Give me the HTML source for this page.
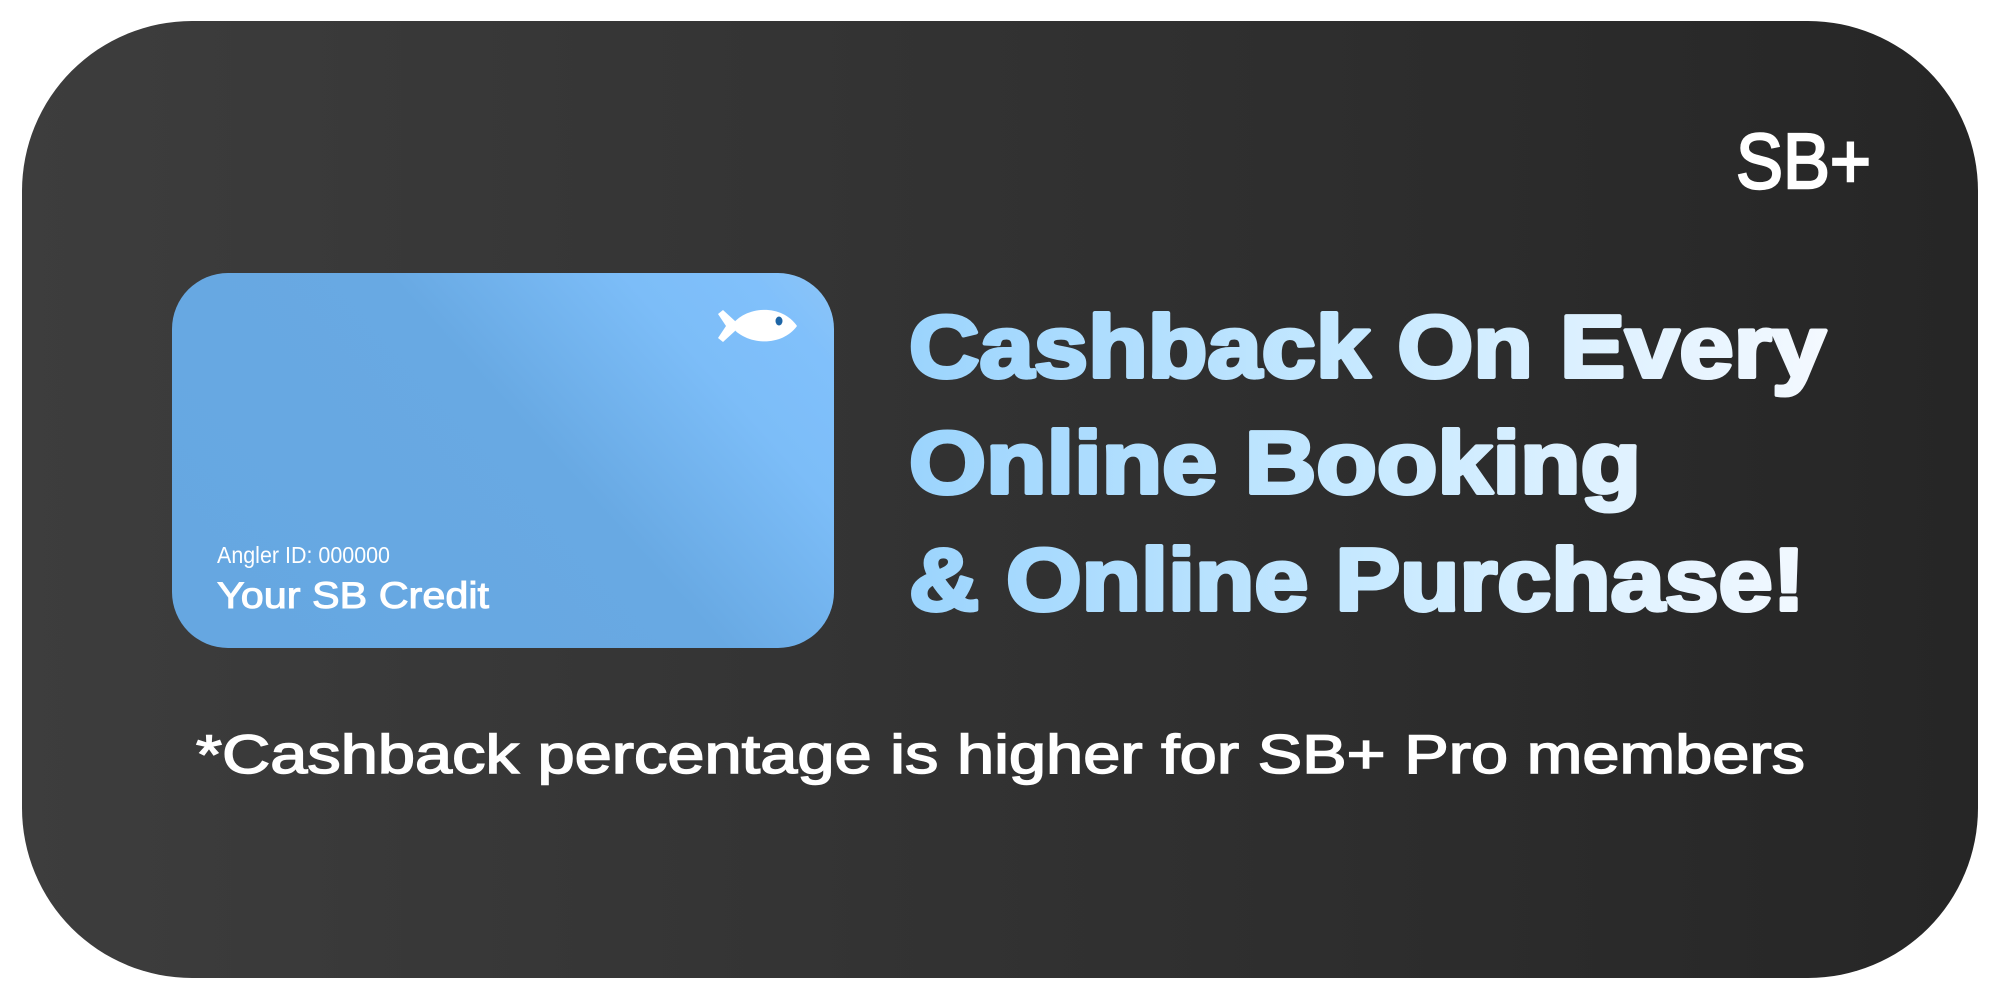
<!DOCTYPE html>
<html><head><meta charset="utf-8"><style>
html,body{margin:0;padding:0;background:#fff;width:2000px;height:1000px;overflow:hidden}
svg{display:block}
</style></head><body>
<svg width="2000" height="1000" viewBox="0 0 2000 1000" xmlns="http://www.w3.org/2000/svg">
<defs>
<linearGradient id="bg" x1="0" y1="0" x2="1" y2="0">
<stop offset="0" stop-color="#3d3d3d"/><stop offset="1" stop-color="#262626"/>
</linearGradient>
<linearGradient id="card" gradientUnits="userSpaceOnUse" x1="300" y1="700" x2="820" y2="230">
<stop offset="0" stop-color="#66a7e1"/><stop offset="0.5" stop-color="#68a9e3"/><stop offset="0.75" stop-color="#7cbdf8"/><stop offset="0.88" stop-color="#80c0fb"/><stop offset="1" stop-color="#8fc6f6"/>
</linearGradient>
<linearGradient id="hl" gradientUnits="userSpaceOnUse" x1="907" y1="0" x2="1828" y2="0">
<stop offset="0" stop-color="#9bd4fd"/><stop offset="0.5" stop-color="#c7e9ff"/><stop offset="1" stop-color="#f4f9ff"/>
</linearGradient>
</defs>
<rect x="22" y="21" width="1956" height="957" rx="170" ry="170" fill="url(#bg)"/>
<text x="1736" y="188" font-family="Liberation Sans, sans-serif" font-size="78" fill="#fff" stroke="#fff" stroke-width="2.5" textLength="135" lengthAdjust="spacingAndGlyphs">SB+</text>
<rect x="172" y="273" width="662" height="375" rx="56" ry="56" fill="url(#card)"/>
<path d="M731,326 C746,305 782,304 797,326 C782,347 746,346 731,326 Z" fill="#fff"/>
<path d="M735,321 L723,310 L718,314 L726,326 L718,338 L723,342 L735,331 Z" fill="#fff"/>
<ellipse cx="779" cy="321" rx="3.5" ry="4.5" fill="#1d65a6"/>
<text x="217" y="563" font-family="Liberation Sans, sans-serif" font-size="23" fill="#fff" textLength="173" lengthAdjust="spacingAndGlyphs">Angler ID: 000000</text>
<text x="217" y="608" font-family="Liberation Sans, sans-serif" font-size="37" fill="#fff" stroke="#fff" stroke-width="1" textLength="272" lengthAdjust="spacingAndGlyphs">Your SB Credit</text>
<g font-family="Liberation Sans, sans-serif" font-weight="bold" font-size="88" fill="url(#hl)" stroke="url(#hl)" stroke-width="4" stroke-linejoin="round">
<text x="909" y="377" textLength="917" lengthAdjust="spacingAndGlyphs">Cashback On Every</text>
<text x="909" y="493" textLength="732" lengthAdjust="spacingAndGlyphs">Online Booking</text>
<text x="909" y="610" textLength="896" lengthAdjust="spacingAndGlyphs">&amp; Online Purchase!</text>
</g>
<text x="196" y="773" font-family="Liberation Sans, sans-serif" font-size="55" fill="#fff" stroke="#fff" stroke-width="1.5" textLength="1609" lengthAdjust="spacingAndGlyphs">*Cashback percentage is higher for SB+ Pro members</text>
</svg>
</body></html>
